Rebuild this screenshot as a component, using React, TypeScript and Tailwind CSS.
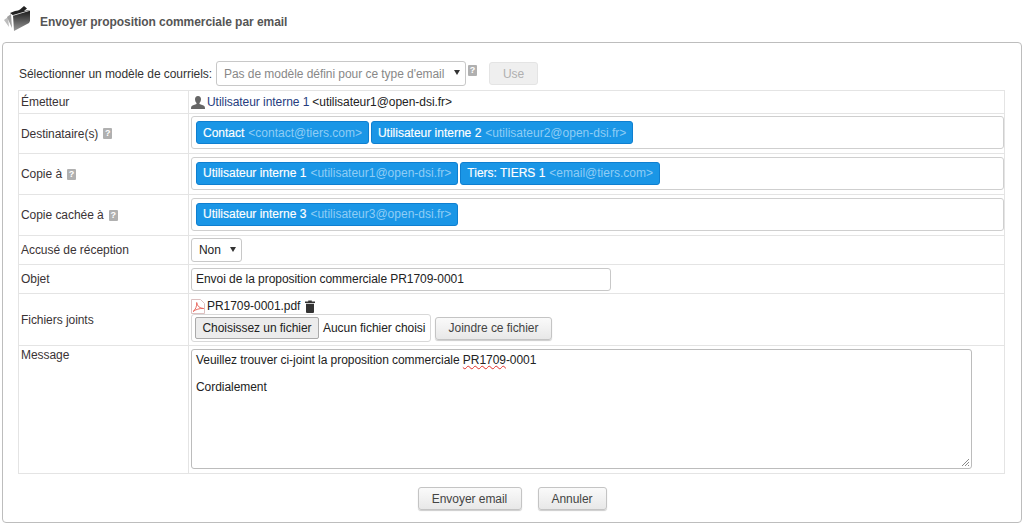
import type { ReactNode } from "react";

const HelpIcon = () => (
  <span className="inline-flex h-[11px] w-[9px] items-center justify-center rounded-[1px] bg-[#b0b0b0] text-[9px] font-bold leading-none text-white">
    ?
  </span>
);

const SelectArrow = ({ className }: { className: string }) => (
  <svg width="6" height="5" viewBox="0 0 6 5" className={`absolute ${className}`}>
    <path d="M0 0h6L3 5z" fill="#333" />
  </svg>
);

const UserIcon = () => (
  <svg width="14" height="13" viewBox="0 0 14 13" className="shrink-0">
    <path d="M7 0c2 0 3 1.300 3 3.300 0 1.500-.7 3-1.500 3.700v1l4 1.500c1 .4 1.500 1.300 1.500 3.500H0c0-2.200.5-3.100 1.500-3.500l4-1.500V7C4.700 6.300 4 4.800 4 3.300 4 1.300 5 0 7 0z" fill="#666" />
  </svg>
);

const PdfIcon = () => (
  <svg width="14" height="15" viewBox="0 0 14 15" className="shrink-0">
    <path d="M.5.500h9l4 4v10H.5z" fill="#fff" stroke="#dcc0c0" />
    <path d="M2 12.500c2.500-1.500 4-5.500 3.700-9 .4 3.500 3 6 7 6-4-.3-8 1-10.700 3z" fill="none" stroke="#ea6a60" strokeWidth="1" />
  </svg>
);

const TrashIcon = () => (
  <svg width="10" height="13" viewBox="0 0 10 13" className="shrink-0">
    <path d="M0 1.500h3.200V.5h3.600v1H10V3H0z" fill="#333" />
    <path d="M1 3.800h8V12a1 1 0 0 1-1 1H2a1 1 0 0 1-1-1z" fill="#333" />
  </svg>
);

const FolderLogo = () => (
  <svg width="26" height="26" viewBox="0 0 26 26" className="shrink-0">
    <defs>
      <linearGradient id="folderFront" x1="0" y1="0" x2="0" y2="1">
        <stop offset="0" stopColor="#1a1a1a" />
        <stop offset="1" stopColor="#9a9a9a" />
      </linearGradient>
    </defs>
    <path d="M4 12 0 15l5 7z" fill="#bdbdbd" />
    <path d="M7 9 3 12l5 11z" fill="#a0a0a0" />
    <path d="M6 8l5-2 3-.5 2-1 4-3.500 3 2.500-3 2.500 6-1v2L10 11z" fill="#222" />
    <path d="M9 10.500l17-5V16l-1 2-15 8z" fill="url(#folderFront)" />
    <path d="M9 10l17-5v.7L9.300 10.800z" fill="#e8e8e8" />
  </svg>
);

const Chip = ({ name, email }: { name: string; email: string }) => (
  <span className="inline-flex h-[23px] items-center whitespace-nowrap rounded-[3px] border border-[#0f7fd0] bg-[#1a96e6] px-[6px] text-[12px] tracking-normal text-white">
    <span className="[-webkit-text-stroke:0.15px_white]">{name}</span>
    <span className="ml-[4px] text-[#8fcdf5]">{email}</span>
  </span>
);

const ChipBox = ({ children }: { children: ReactNode }) => (
  <div className="mb-[2px] flex h-[33px] w-[813px] items-center gap-[2px] rounded-[3px] border border-[#cfcfcf] bg-white pl-[4px]">
    {children}
  </div>
);

const Row = ({
  label,
  height,
  help,
  top,
  children,
}: {
  label: string;
  height: string;
  help?: boolean;
  top?: boolean;
  children: ReactNode;
}) => (
  <div className={`flex border-b border-[#e4e4e4] ${height}`}>
    <div
      className={`flex w-[170px] shrink-0 gap-[5px] border-r border-[#e4e4e4] pl-[2px] text-[#3a3335] ${
        top ? "items-start" : "items-center"
      }`}
    >
      {label}
      {help && <HelpIcon />}
    </div>
    <div className="min-w-0 flex-1 pl-[2px]">{children}</div>
  </div>
);

const GrayButton = ({ children, className }: { children: ReactNode; className: string }) => (
  <button
    className={`h-[23px] rounded-[3px] border border-[#c4c4c4] bg-gradient-to-b from-[#fafafa] to-[#e8e8e8] text-[12px] text-[#444] shadow-[0_1px_1px_rgba(0,0,0,0.2)] ${className}`}
  >
    {children}
  </button>
);

export default function App() {
  return (
    <div className="h-[525px] w-[1024px] overflow-hidden bg-white font-['Liberation_Sans',Arial,sans-serif] text-[12px] tracking-[-0.05px] text-[#333]">
      <div className="flex h-[42px] items-start gap-[10px] pl-[4px] pt-[5px]">
        <FolderLogo />
        <h1 className="pt-[8px] text-[12px] font-bold text-[#555]">Envoyer proposition commerciale par email</h1>
      </div>

      <div className="mx-[2px] h-[481px] rounded-[4px] border border-[#bdbdbd] px-[15px] pt-[16px]">
        <div className="flex h-[31px] items-center pb-[2px] pl-[1px]">
          <span>Sélectionner un modèle de courriels:</span>
          <div className="relative ml-[4px] flex h-[25px] w-[250px] items-center rounded-[3px] border border-[#c8c8c8] pl-[7px] text-[#888]">
            Pas de modèle défini pour ce type d&apos;email
            <SelectArrow className="right-[5px] top-[8px]" />
          </div>
          <span className="mb-[6px] ml-[2px] flex"><HelpIcon /></span>
          <button className="ml-[12px] h-[23px] w-[49px] rounded-[3px] border border-[#e4e4e4] bg-[#efefef] text-[12px] text-[#b0b0b0]">
            Use
          </button>
        </div>

        <div className="w-[987px] border-x border-t border-[#e4e4e4]">
          <Row label="Émetteur" height="h-[23px]">
            <div className="flex h-full items-center gap-[2px]">
              <UserIcon />
              <span className="mr-[1px] text-[#263c7e]">Utilisateur interne 1</span>
              <span className="text-[#222]">&lt;utilisateur1@open-dsi.fr&gt;</span>
            </div>
          </Row>
          <Row label="Destinataire(s)" height="h-[40px]" help>
            <div className="flex h-full items-center">
              <ChipBox>
                <Chip name="Contact" email="<contact@tiers.com>" />
                <Chip name="Utilisateur interne 2" email="<utilisateur2@open-dsi.fr>" />
              </ChipBox>
            </div>
          </Row>
          <Row label="Copie à" height="h-[41px]" help>
            <div className="flex h-full items-center">
              <ChipBox>
                <Chip name="Utilisateur interne 1" email="<utilisateur1@open-dsi.fr>" />
                <Chip name="Tiers: TIERS 1" email="<email@tiers.com>" />
              </ChipBox>
            </div>
          </Row>
          <Row label="Copie cachée à" height="h-[41px]" help>
            <div className="flex h-full items-center">
              <ChipBox>
                <Chip name="Utilisateur interne 3" email="<utilisateur3@open-dsi.fr>" />
              </ChipBox>
            </div>
          </Row>
          <Row label="Accusé de réception" height="h-[29px]">
            <div className="flex h-full items-center pb-[1px]">
              <div className="relative flex h-[24px] w-[51px] items-center rounded-[3px] border border-[#c8c8c8] pl-[7px] text-[#222]">
                Non
                <SelectArrow className="right-[5px] top-[8px]" />
              </div>
            </div>
          </Row>
          <Row label="Objet" height="h-[29px]">
            <div className="flex h-full items-center">
              <div className="flex h-[23px] w-[420px] items-center rounded-[3px] border border-[#c8c8c8] pl-[4px] text-[#222]">
                Envoi de la proposition commerciale PR1709-0001
              </div>
            </div>
          </Row>
          <Row label="Fichiers joints" height="h-[52px]">
            <div className="flex h-[20px] items-center gap-[2px] pt-[4px] text-[#222]">
              <PdfIcon />
              <span>PR1709-0001.pdf</span>
              <span className="ml-[3px] flex"><TrashIcon /></span>
            </div>
            <div className="flex items-center gap-[4px]">
              <div className="flex h-[28px] w-[240px] items-center gap-[4px] rounded-[3px] border border-[#d8d8d8] pl-[3px] text-[#222]">
                <span className="flex h-[22px] w-[124px] items-center justify-center rounded-[2px] border border-[#aaa] bg-[#ececec]">
                  Choisissez un fichier
                </span>
                Aucun fichier choisi
              </div>
              <GrayButton className="w-[117px]">Joindre ce fichier</GrayButton>
            </div>
          </Row>
          <Row label="Message" height="h-[128px]" top>
            <div className="relative mt-[3px] h-[120px] w-[781px] rounded-[3px] border border-[#bcbcbc] pl-[4px] pt-[3px] leading-[14px] text-[#222]">
              <p>
                Veuillez trouver ci-joint la proposition commerciale{" "}
                <span className="underline decoration-[#e0302a] decoration-wavy decoration-[1px]">PR1709</span>-0001
              </p>
              <p className="mt-[13px]">Cordialement</p>
              <svg width="9" height="9" viewBox="0 0 9 9" className="absolute bottom-[1px] right-[1px]">
                <path d="M1 8 8 1M4 8l4-4M7 8l1-1" stroke="#8a8a8a" strokeWidth="1" />
              </svg>
            </div>
          </Row>
        </div>

        <div className="mt-[13px] flex justify-center gap-[16px]">
          <GrayButton className="w-[104px]">Envoyer email</GrayButton>
          <GrayButton className="w-[69px]">Annuler</GrayButton>
        </div>
      </div>
    </div>
  );
}
